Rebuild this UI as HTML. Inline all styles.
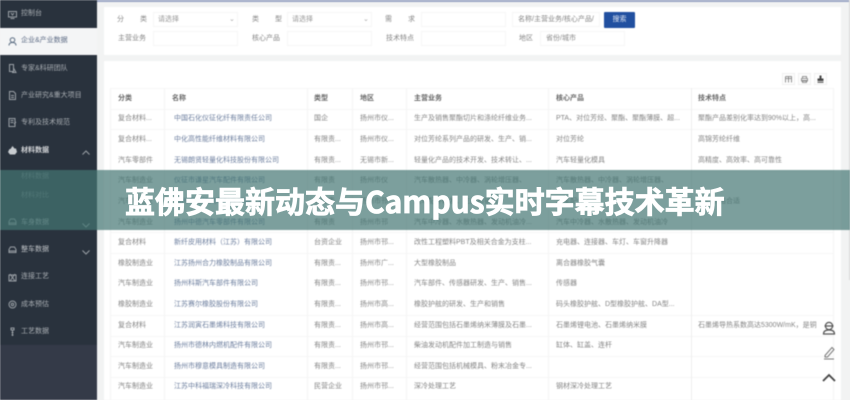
<!DOCTYPE html>
<html lang="zh">
<head>
<meta charset="utf-8">
<title>蓝佛安最新动态与Campus实时字幕技术革新</title>
<style>
html,body{margin:0;padding:0;width:850px;height:400px;overflow:hidden;background:#f2f3f3}
body{font-family:"Liberation Sans","Noto Sans CJK SC",sans-serif;position:relative}
#p{position:absolute;left:0;top:0;width:850px;height:400px;overflow:hidden;filter:blur(.55px);font-size:7px;color:#858585}
#p div,#p span,#p svg{position:absolute}
#p span{white-space:nowrap;line-height:10px}
.top{left:97px;top:0;width:753px;height:1.5px;background:#9ba6c4}
#side{left:0;top:0;width:97px;height:400px;background:#343a48}
#menu{left:0;top:0;width:97px;height:345px;background:#29323d}
#act{left:0;top:28px;width:97px;height:27px;background:#f4f5f6}
#side span{color:#a8adb2;font-size:7px;left:21px}
#side svg{fill:none;stroke:#9aa0a6;stroke-width:1}
.card{background:#fff;left:104px;width:737px}
.box{border:1px solid #f6f6f6;background:#fff;height:15px;box-sizing:border-box}
.fl{color:#858585;font-size:7px}
#btn{left:604px;top:12px;width:31px;height:16px;background:#2150a0;border-radius:1px;color:#dfe6f2;font-size:7px;line-height:16px;text-align:center}
.tool{top:73px;width:13px;height:12px;border:1px solid #f0f0f0;box-sizing:border-box;background:#fdfdfd}
.v{top:88px;bottom:0;width:1px;background:#f4f4f4}
.h{left:110px;width:723px;height:1px;background:#f6f6f6}
.r{left:0;width:850px;height:10px}
.c1{left:118px}.c2{left:174px;color:#6c7e9e}.c3{left:314px}.c4{left:360px}.c5{left:414px}.c6{left:556px}.c7{left:698px}
.th span{color:#666;font-weight:bold}
.th .c2{left:172px;color:#666}
#band{left:0;top:170px;width:850px;height:60px;background:rgba(69,118,115,.7)}
h1{position:absolute;left:125px;top:180px;margin:0;font:bold 30px/40px "Noto Sans CJK SC","Liberation Sans",sans-serif;color:#fff;white-space:nowrap;-webkit-text-stroke:.8px #fff;filter:blur(.25px)}
h1 b{font-weight:bold}
</style>
</head>
<body>
<div id="p">
<div class="top"></div>

<div class="card" style="top:7px;height:48px"></div>
<span class="fl" style="left:117px;top:15px">分</span><span class="fl" style="left:140px;top:15px">类</span>
<div class="box" style="left:153px;top:12px;width:85px"></div><span class="fl" style="left:158px;top:15px;color:#999">请选择</span><span class="fl" style="left:229px;top:15px;color:#aaa">⌄</span>
<span class="fl" style="left:252px;top:15px">类</span><span class="fl" style="left:275px;top:15px">型</span>
<div class="box" style="left:287px;top:12px;width:85px"></div><span class="fl" style="left:292px;top:15px;color:#999">请选择</span><span class="fl" style="left:363px;top:15px;color:#aaa">⌄</span>
<span class="fl" style="left:385px;top:15px">需</span><span class="fl" style="left:408px;top:15px">求</span>
<div class="box" style="left:421px;top:12px;width:85px"></div>
<div class="box" style="left:512px;top:12px;width:88px"></div><span class="fl" style="left:518px;top:15px">名称/主营业务/核心产品/</span>
<div id="btn">搜索</div>
<span class="fl" style="left:118px;top:34px">主营业务</span>
<div class="box" style="left:153px;top:31px;width:85px"></div>
<span class="fl" style="left:252px;top:34px">核心产品</span>
<div class="box" style="left:287px;top:31px;width:85px"></div>
<span class="fl" style="left:386px;top:34px">技术特点</span>
<div class="box" style="left:421px;top:31px;width:85px"></div>
<span class="fl" style="left:519px;top:34px">地区</span>
<div class="box" style="left:540px;top:31px;width:85px"></div><span class="fl" style="left:546px;top:34px;color:#888">省份/城市</span>

<div class="card" style="top:61px;height:339px"></div>
<div class="tool" style="left:782px"></div><div class="tool" style="left:798px"></div><div class="tool" style="left:814px"></div>
<svg style="left:785px;top:76px" width="7" height="7" viewBox="0 0 7 7" fill="none" stroke="#777" stroke-width=".8"><path d="M.5.5h6v6M.5.5v6M.5 2.5h6M3.5.5v6"/></svg>
<svg style="left:801px;top:76px" width="7" height="7" viewBox="0 0 7 7" fill="none" stroke="#777" stroke-width=".8"><path d="M1.5 2V.5h4V2M.5 2.5h6V5H.5zM1.5 4.5h4v2h-4z"/></svg>
<svg style="left:817px;top:75px" width="7" height="8" viewBox="0 0 7 8" fill="#444"><path d="M2.5.5h2v3h2V6H.5V3.500h2zM.5 6.800h6v1h-6z"/></svg>

<div class="h" style="top:88px"></div>
<div class="h" style="top:109px"></div>
<div class="h" style="top:129px"></div>
<div class="h" style="top:171px"></div>
<div class="h" style="top:232px"></div>
<div class="h" style="top:253px"></div>
<div class="h" style="top:315px"></div>
<div class="h" style="top:336px"></div>
<div class="h" style="top:356px"></div>
<div class="h" style="top:377px"></div>
<div class="v" style="left:110px"></div>
<div class="v" style="left:164px"></div>
<div class="v" style="left:307px"></div>
<div class="v" style="left:352px"></div>
<div class="v" style="left:406px"></div>
<div class="v" style="left:548px"></div>
<div class="v" style="left:691px;background:#eeeeee"></div>
<div class="v" style="left:833px"></div>

<div class="r th" style="top:94px"><span class="c1">分类</span><span class="c2">名称</span><span class="c3" style="color:#666">类型</span><span class="c4">地区</span><span class="c5">主营业务</span><span class="c6">核心产品</span><span class="c7">技术特点</span></div>
<div class="r" style="top:114px"><span class="c1">复合材料...</span><span class="c2">中国石化仪征化纤有限责任公司</span><span class="c3">国企</span><span class="c4">扬州市仪...</span><span class="c5">生产及销售聚酯切片和涤纶纤维业务...</span><span class="c6">PTA、对位芳烃、聚酯、聚酯薄膜、超...</span><span class="c7">聚酯产品差别化率达到90%以上，高...</span></div>
<div class="r" style="top:135px"><span class="c1">复合材料...</span><span class="c2">中化高性能纤维材料有限公司</span><span class="c3">有限责...</span><span class="c4">扬州市仪...</span><span class="c5">对位芳纶系列产品的研发、生产、销...</span><span class="c6">对位芳纶</span><span class="c7">高锦芳纶纤维</span></div>
<div class="r" style="top:156px"><span class="c1">汽车零部件</span><span class="c2">无锡朗贤轻量化科技股份有限公司</span><span class="c3">有限责...</span><span class="c4">无锡市新...</span><span class="c5">轻量化产品的技术开发、技术转让、...</span><span class="c6">汽车轻量化模具</span><span class="c7">高精度、高效率、高可靠性</span></div>
<div class="r" style="top:176px"><span class="c1">汽车制造业</span><span class="c2">仪征市谦星汽车配件有限公司</span><span class="c3">有限责</span><span class="c4">扬州市仪</span><span class="c5">汽车散热器、中冷器、涡轮增压器、</span><span class="c6">汽车散热器、中冷器、涡轮增压器、</span></div>
<div class="r" style="top:197px"><span class="c1">汽车制造业</span><span class="c2">扬州市邗江汽车配件有限公司</span><span class="c3">有限责</span><span class="c4">扬州市邗</span><span class="c5">汽车配件研发、生产和销售</span><span class="c6">汽车配件</span><span class="c7">性，价格合适</span></div>
<div class="r" style="top:218px"><span class="c1">汽车制造业</span><span class="c2">扬州中德汽车零部件有限公司</span><span class="c3">有限责</span><span class="c4">扬州市邗</span><span class="c5">汽车中冷器、水散热器、发动机油冷...</span><span class="c6">汽车中冷器、水散热器、发动机油冷</span></div>
<div class="r" style="top:238px"><span class="c1">复合材料</span><span class="c2">新纤皮用材料（江苏）有限公司</span><span class="c3">台资企业</span><span class="c4">扬州市邗...</span><span class="c5">改性工程塑料PBT及相关合金为支柱...</span><span class="c6">充电器、连接器、车灯、车窗升降器</span></div>
<div class="r" style="top:259px"><span class="c1">橡胶制造业</span><span class="c2">江苏扬州合力橡胶制品有限公司</span><span class="c3">有限责...</span><span class="c4">扬州市广...</span><span class="c5">大型橡胶制品</span><span class="c6">离合器橡胶气囊</span></div>
<div class="r" style="top:279px"><span class="c1">汽车制造业</span><span class="c2">扬州科斯汽车部件有限公司</span><span class="c3">有限责...</span><span class="c4">扬州市邗...</span><span class="c5">汽车部件、传感器研发、生产、销售...</span><span class="c6">传感器</span></div>
<div class="r" style="top:300px"><span class="c1">橡胶制造业</span><span class="c2">江苏赛尔橡胶股份有限公司</span><span class="c3">有限责...</span><span class="c4">扬州市高...</span><span class="c5">橡胶护舷的研发、生产和销售</span><span class="c6">码头橡胶护舷、D型橡胶护舷、DA型...</span></div>
<div class="r" style="top:321px"><span class="c1">复合材料</span><span class="c2">江苏润寅石墨烯科技有限公司</span><span class="c3">有限责...</span><span class="c4">扬州市高...</span><span class="c5">经营范围包括石墨烯纳米薄膜及石墨...</span><span class="c6">石墨烯锂电池、石墨烯纳米膜</span><span class="c7">石墨烯导热系数高达5300W/mK，是铜</span></div>
<div class="r" style="top:341px"><span class="c1">汽车制造业</span><span class="c2">扬州市德林内燃机配件有限公司</span><span class="c3">有限责...</span><span class="c4">扬州市邗...</span><span class="c5">柴油发动机配件加工制造与销售</span><span class="c6">缸体、缸盖、连杆</span></div>
<div class="r" style="top:362px"><span class="c1">汽车制造业</span><span class="c2">扬州市穆意模具制造有限公司</span><span class="c3">有限责...</span><span class="c4">扬州市邗...</span><span class="c5">经营范围包括机械模具、粉末冶金专...</span></div>
<div class="r" style="top:382px"><span class="c1">汽车制造业</span><span class="c2">江苏中科福瑞深冷科技有限公司</span><span class="c3">民营企业</span><span class="c4">扬州市邗...</span><span class="c5">深冷处理工艺</span><span class="c6">钢材深冷处理工艺</span></div>

<svg style="left:822px;top:321px" width="14" height="14" viewBox="0 0 14 14" fill="none" stroke="#555" stroke-width="1.2"><circle cx="7" cy="5" r="3.600"/><path d="M2.500 5h9M1.500 13c0-3 2-4 5.500-4s5.500 1 5.500 4z"/></svg>
<svg style="left:823px;top:346px" width="13" height="14" viewBox="0 0 13 14" fill="none" stroke="#777" stroke-width="1"><path d="M2 9.500L9 1.500l2 2-6.500 7.500H2zM1 13h10"/></svg>
<svg style="left:822px;top:373px" width="14" height="9" viewBox="0 0 14 9" fill="none" stroke="#444" stroke-width="1.800"><path d="M1 8l6-6 6 6"/></svg>
<div style="left:849px;top:0;width:1px;height:280px;background:#d8d8d8"></div>

<div id="side">
<div id="menu"></div>
<div id="act"></div>
<svg style="left:8px;top:11px" width="9" height="8" viewBox="0 0 9 8"><path d="M.5.5h8v5.500h-8zM2.500 7.500h4M3 2l1.500 2L6 2"/></svg>
<span style="top:9px">控制台</span>
<svg style="left:8px;top:37px;stroke:#5b6d82" width="9" height="9" viewBox="0 0 9 9"><circle cx="4.500" cy="3" r="2.300"/><path d="M1 8.500c0-2 1.500-3 3.500-3s3.500 1 3.500 3"/></svg>
<span style="top:36px;color:#5f6d86">企业&amp;产业数据</span>
<svg style="left:8px;top:64px" width="9" height="9" viewBox="0 0 9 9"><path d="M1.500.5h4v7h-4zM5.500 4l2.500 4.500H4"/></svg>
<span style="top:64px">专家&amp;科研团队</span>
<svg style="left:8px;top:91px" width="9" height="9" viewBox="0 0 9 9"><path d="M1.500.5h4l2 2v6h-6zM3 4.500h3M3 6.500h3"/></svg>
<span style="top:91px">产业研究&amp;重大项目</span>
<svg style="left:8px;top:118px" width="9" height="9" viewBox="0 0 9 9"><path d="M1 .5h6v8H1zM2.500 2.500h3M2.500 4.500h3M6 6l2-2"/></svg>
<span style="top:118px">专利及技术规范</span>
<svg style="left:8px;top:146px;fill:#c8ccd0;stroke:none" width="9" height="9" viewBox="0 0 9 9"><path d="M4.500 0l2 2.500H8L9 6 7 8.500H2L0 6l1.500-3h1z"/></svg>
<span style="top:146px;color:#d4d6d9;font-weight:bold">材料数据</span>
<svg style="left:82px;top:150px" width="8" height="5" viewBox="0 0 8 5"><path d="M.5 4.500L4 1l3.500 3.500"/></svg>
<span style="top:172px;color:#6f7a80">材料数据</span>
<span style="top:191px;color:#6f7a80">材料对比</span>
<svg style="left:8px;top:218px" width="9" height="8" viewBox="0 0 9 8"><path d="M1 3.500L2.500 1h4L8 3.500v3H1zM1 5h7"/></svg>
<span style="top:218px">车身数据</span>
<svg style="left:82px;top:223px" width="8" height="5" viewBox="0 0 8 5"><path d="M.5.500L4 4 7.500.5"/></svg>
<svg style="left:8px;top:246px" width="9" height="8" viewBox="0 0 9 8"><path d="M1 3.500L2.500 1h4L8 3.500v3H1zM1 5h7"/></svg>
<span style="top:245px;color:#bcc0c4">整车数据</span>
<svg style="left:82px;top:250px" width="8" height="5" viewBox="0 0 8 5"><path d="M.5.500L4 4 7.500.5"/></svg>
<svg style="left:8px;top:273px" width="9" height="9" viewBox="0 0 9 9"><path d="M1 2h7v6H1zM2 1l5 7M7 1L2 8"/></svg>
<span style="top:272px">连接工艺</span>
<svg style="left:8px;top:300px" width="9" height="9" viewBox="0 0 9 9"><circle cx="4.500" cy="4.500" r="3.500"/><circle cx="4.500" cy="4.500" r="1.200"/></svg>
<span style="top:300px">成本预估</span>
<svg style="left:8px;top:327px" width="9" height="10" viewBox="0 0 9 10"><path d="M3 1h3v2H3zM4.500 3v6M3.500 5.500h2M3.500 8h2"/></svg>
<span style="top:327px">工艺数据</span>
</div>

<div id="band"></div>
</div>
<h1>蓝佛安最新动态与<b>Campus</b>实时字幕技术革新</h1>
</body>
</html>
